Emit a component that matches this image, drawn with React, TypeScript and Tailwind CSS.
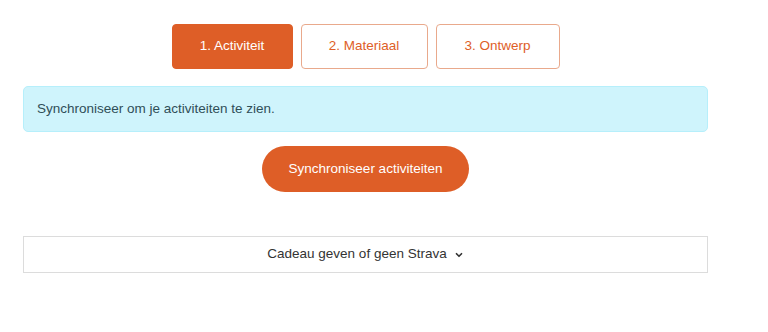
import { ChevronDown } from 'lucide-react';

const steps = ['1. Activiteit', '2. Materiaal', '3. Ontwerp'];

export default function App() {
  return (
    <div className="min-h-[332px] w-[768px] bg-white font-['Liberation_Sans',Arial,sans-serif] text-[13.5px]">
      <div className="ml-[23px] w-[685px] pt-[24px]">
        {/* stappen */}
        <div className="flex justify-center gap-[8px]">
          {steps.map((s, i) => (
            <button
              key={s}
              className={
                i === 0
                  ? 'h-[45px] w-[121px] rounded-[4px] border border-[#de5e27] bg-[#de5e27] text-white'
                  : i === 1
                    ? 'h-[45px] w-[127px] rounded-[4px] border border-[#e9a98c] bg-white text-[#de5e27]'
                    : 'h-[45px] w-[124px] rounded-[4px] border border-[#e9a98c] bg-white text-[#de5e27]'
              }
            >
              {s}
            </button>
          ))}
        </div>

        <div className="mt-[17px] flex h-[46px] items-center rounded-[5px] border border-[#b6effb] bg-[#cff4fc] px-[13px] text-[#2f4f58]">
          Synchroniseer om je activiteiten te zien.
        </div>

        <div className="mt-[14px] flex justify-center">
          <button className="h-[46px] w-[207px] rounded-full bg-[#de5e27] text-white">
            Synchroniseer activiteiten
          </button>
        </div>

        <div className="mt-[44px] flex h-[37px] items-center justify-center gap-[7px] border border-[#dcdcdc] text-[#333]">
          <span>Cadeau geven of geen Strava</span>
          <ChevronDown size={10} strokeWidth={4} />
        </div>
      </div>
    </div>
  );
}
